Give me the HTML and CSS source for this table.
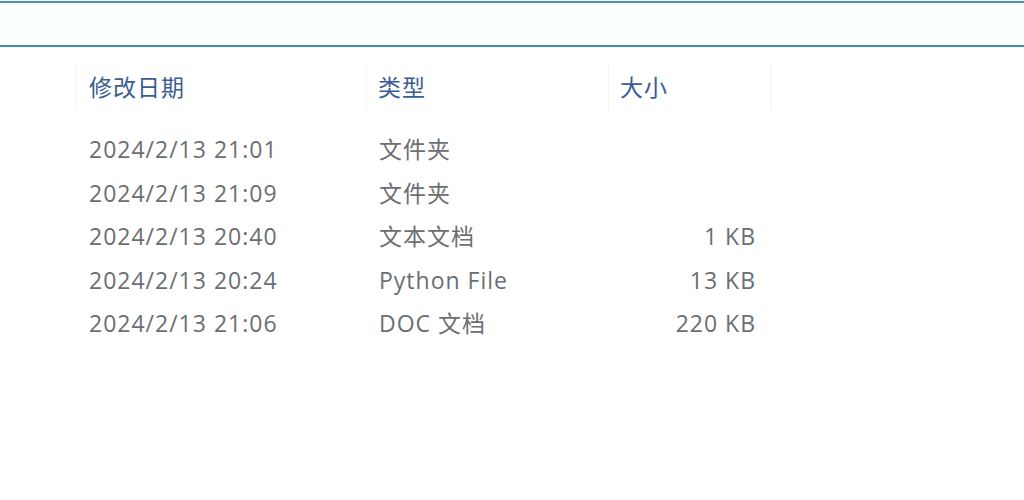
FILE: index.html
```html
<!DOCTYPE html>
<html lang="zh-CN">
<head>
    <meta charset="UTF-8">
    <link rel="stylesheet" href="styles.css">
</head>
<body>
    <div class="address-bar"></div>

    <div class="file-list">
        <div class="list-header">
            <div class="col col-date">修改日期</div>
            <div class="col col-type">类型</div>
            <div class="col col-size">大小</div>
        </div>

        <div class="list-rows">
            <div class="row">
                <div class="cell col-date">2024/2/13 21:01</div>
                <div class="cell col-type">文件夹</div>
                <div class="cell col-size"></div>
            </div>
            <div class="row">
                <div class="cell col-date">2024/2/13 21:09</div>
                <div class="cell col-type">文件夹</div>
                <div class="cell col-size"></div>
            </div>
            <div class="row">
                <div class="cell col-date">2024/2/13 20:40</div>
                <div class="cell col-type">文本文档</div>
                <div class="cell col-size">1 KB</div>
            </div>
            <div class="row">
                <div class="cell col-date">2024/2/13 20:24</div>
                <div class="cell col-type">Python File</div>
                <div class="cell col-size">13 KB</div>
            </div>
            <div class="row">
                <div class="cell col-date">2024/2/13 21:06</div>
                <div class="cell col-type">DOC 文档</div>
                <div class="cell col-size">220 KB</div>
            </div>
        </div>
    </div>
</body>
</html>
```

FILE: styles.css
```css
body {
    margin: 0;
    background-color: #fff;
    font-family: "Open Sans", "Noto Sans CJK SC", sans-serif;
    font-size: 23px;
    letter-spacing: 1px;
}

.address-bar {
    margin-top: 1px;
    height: 42px;
    border-top: 2px solid #4a93b8;
    border-bottom: 2px solid #3a8cbc;
    background-color: #fbfffe;
}

.file-list {
    padding-left: 76px;
    padding-top: 17px;
}

.list-header,
.row {
    display: grid;
    grid-template-columns: 291px 242px 162px;
}

.list-header .col {
    height: 47px;
    line-height: 47px;
    color: #3b5e91;
    border-right: 1px solid #f3f3f3;
}

.list-header .col-date {
    border-left: 1px solid #f3f3f3;
    padding-left: 12px;
}

.list-header .col-type {
    padding-left: 11px;
}

.list-header .col-size {
    padding-left: 11px;
}

.list-rows {
    padding-top: 17px;
}

.row {
    height: 43.5px;
    line-height: 43.5px;
    color: #6b6e72;
}

.cell.col-date {
    padding-left: 13px;
}

.cell.col-type {
    padding-left: 12px;
}

.cell.col-size {
    text-align: right;
    padding-right: 15px;
}
```
